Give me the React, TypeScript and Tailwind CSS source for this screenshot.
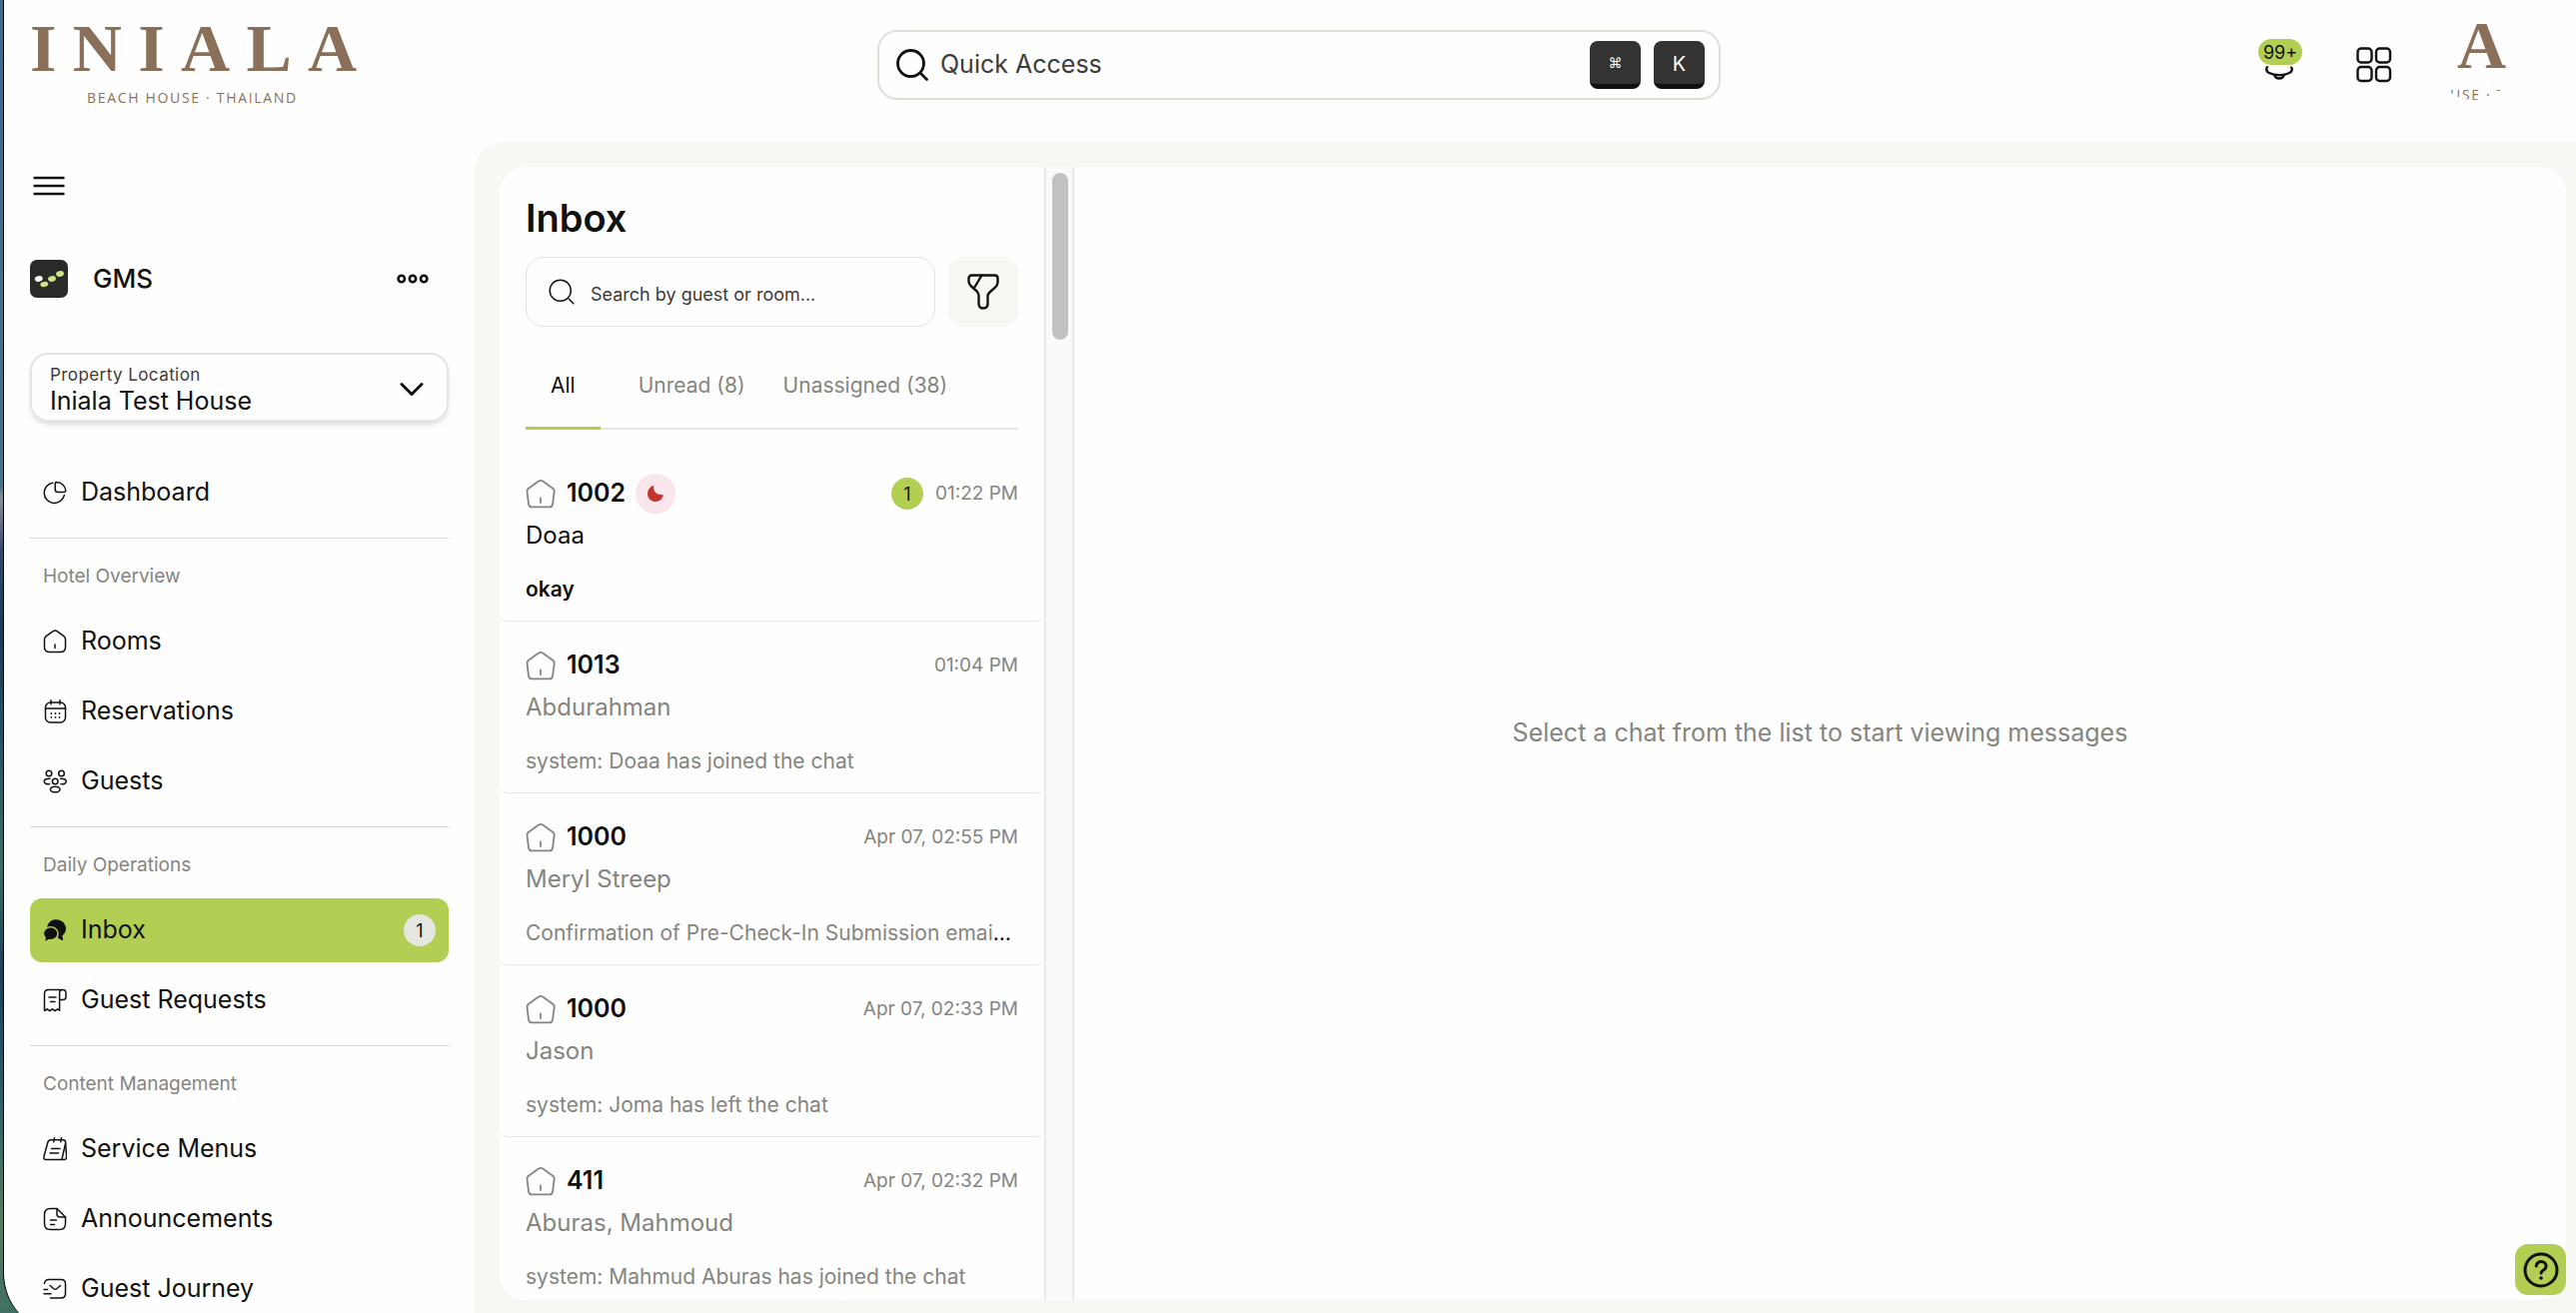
import React from "react";

type IconProps = { className?: string };

const stroke = {
  fill: "none",
  stroke: "currentColor",
  strokeLinecap: "round" as const,
  strokeLinejoin: "round" as const,
};

function Tagline() {
  return (
    <span className="block font-['Open_Sans',sans-serif] text-[14px] leading-[16px] tracking-[0.12em] whitespace-nowrap">
      BEACH HOUSE · THAILAND
    </span>
  );
}

function Wordmark() {
  return (
    <div className="w-[350px] text-[#8a7058]">
      <div className="font-['Liberation_Serif',serif] text-[68px] font-bold leading-[44px] tracking-[0.24em] whitespace-nowrap">
        INIALA
      </div>
      <div className="mt-[20px] pl-[57px]">
        <Tagline />
      </div>
    </div>
  );
}

function SearchIcon({ className, width = 2 }: IconProps & { width?: number }) {
  return (
    <svg viewBox="0 0 32 32" strokeWidth={width} {...stroke} className={className} aria-hidden="true">
      <circle cx="14.5" cy="14.5" r="13" />
      <path d="M25 25l5.5 5.5" />
    </svg>
  );
}

function PieIcon() {
  return (
    <svg viewBox="0 0 24 24" strokeWidth="1.5" {...stroke} className="size-6 shrink-0" aria-hidden="true">
      <path d="M9.8 2.2A10.2 10.2 0 1 0 21.4 14.4" />
      <path d="M13.5 1.6c5 .2 8.700 3.500 9.200 8 .1 1.300-.6 2-1.700 2h-6c-1.900 0-2.800-.9-2.800-2.800V3c0-.9.500-1.400 1.300-1.400z" />
    </svg>
  );
}

function RoomsIcon() {
  return (
    <svg viewBox="0 0 24 24" strokeWidth="1.5" {...stroke} className="size-6 shrink-0" aria-hidden="true">
      <path d="M10.200 1.700c1.200-.9 2.600-.9 3.800 0l6.800 4.900c1.100.8 1.700 1.900 1.700 3.200v7.700c0 3.200-1.800 5-5 5h-11c-3.200 0-5-1.800-5-5V9.800c0-1.300.6-2.400 1.700-3.200z" />
      <path d="M12 15v3.500" />
    </svg>
  );
}

function CalendarIcon() {
  return (
    <svg viewBox="0 0 24 24" strokeWidth="1.5" {...stroke} className="size-6 shrink-0" aria-hidden="true">
      <rect x="2.500" y="3" width="20" height="20" rx="5" />
      <path d="M2.500 9h20M8 .8v4M17 .8v4" />
      <g strokeWidth="1.800">
        <path d="M8.300 14h.01M12.500 14h.01M16.500 14h.01M8.300 17.800h.01M12.500 17.800h.01M16.500 17.800h.01" />
      </g>
    </svg>
  );
}

function GuestsIcon() {
  return (
    <svg viewBox="0 0 24 24" strokeWidth="1.500" {...stroke} className="size-6 shrink-0" aria-hidden="true">
      <circle cx="6" cy="4" r="2.800" />
      <circle cx="18.500" cy="4" r="2.800" />
      <circle cx="12.200" cy="12" r="2.800" />
      <ellipse cx="12.200" cy="20" rx="4.800" ry="2.800" />
      <path d="M7 9.200C3.800 9 1.200 10 1.200 12s2.300 3 5.300 2.600M17.500 9.200c3.200-.2 5.800.8 5.800 2.800s-2.300 3-5.300 2.600" />
    </svg>
  );
}

function ChatIcon() {
  return (
    <svg viewBox="0 0 24 24" fill="currentColor" className="size-6 shrink-0" aria-hidden="true">
      <path d="M13 1.200c5.600 0 10 3.900 10 9 0 3-1.500 5.500-3.700 7.200l.8 3.300c.2 1-.8 1.600-1.600 1.100l-3.700-2.300c.6-1.200.9-2.500.9-3.800 0-4.400-3.600-7.600-8.200-7.600-1.200 0-2.300.2-3.300.6C5.200 3.800 8.700 1.200 13 1.200z" />
      <path d="M7.700 9.600c3.700 0 6.500 2.500 6.500 5.700s-2.800 5.700-6.500 5.700c-.6 0-1.300-.1-1.900-.2l-2.300 1.400c-.6.400-1.300-.1-1.100-.8l.5-2.300c-1.100-1-1.700-2.300-1.700-3.800 0-3.200 2.800-5.700 6.500-5.700z" />
    </svg>
  );
}

function ReceiptIcon() {
  return (
    <svg viewBox="0 0 24 24" strokeWidth="1.500" {...stroke} className="size-6 shrink-0" aria-hidden="true">
      <path d="M20 1.500H5.500c-2.500 0-4 1.500-4 4v17l2.700-1.700 2.600 1.900 2.600-1.900 2.600 1.900 2.600-1.900 2 1.400V5c0-2.200 1.200-3.500 3.200-3.500 2.300 0 3.200 1.500 3.200 3.500v3.500c0 2-1 3-3 3h-3.400" />
      <path d="M6 9h7M7.500 13.500H12" />
    </svg>
  );
}

function MenusIcon() {
  return (
    <svg viewBox="0 0 24 24" strokeWidth="1.500" {...stroke} className="size-6 shrink-0" aria-hidden="true">
      <path d="M8 2.800h12c1.600 0 2.500.9 2.600 2.500l1 14.200c.1 1.900-.8 3-2.700 3H3c-1.700 0-2.600-1.100-2.100-2.800L4.800 5.200C5.300 3.600 6.400 2.800 8 2.800z" />
      <path d="M22.500 6.500L19 22M11.500.8l-.8 4M18.500.8l-.8 4M8.500 11.500h8.500M7 16h8.500" />
    </svg>
  );
}

function NoteIcon() {
  return (
    <svg viewBox="0 0 24 24" strokeWidth="1.500" {...stroke} className="size-6 shrink-0" aria-hidden="true">
      <path d="M14 1.500H7.500c-3.700 0-6 2.300-6 6v9c0 3.700 2.300 6 6 6h9c3.700 0 6-2.300 6-6V10z" />
      <path d="M14 1.500V7c0 2 1 3 3 3h5.500M7.500 13h6M7.500 17.500h4" />
    </svg>
  );
}

function JourneyIcon() {
  return (
    <svg viewBox="0 0 24 24" strokeWidth="1.500" {...stroke} className="size-6 shrink-0" aria-hidden="true">
      <path d="M1.500 6.500c.2-2.500 1.800-4 4.500-4h12c3 0 4.500 1.700 4.500 4.500v9.500c0 3-1.500 4.500-4.500 4.500H7.500" />
      <path d="M7 8.500l3.500 3c1.200 1 2.300 1 3.500 0l3.500-3M1 12.500h3.500M1 16.800h7" />
    </svg>
  );
}

function HouseIcon() {
  return (
    <svg viewBox="0 0 30 30" strokeWidth="1.800" {...stroke} className="size-[30px] shrink-0 text-[#85857f]" aria-hidden="true">
      <path d="M13 2.600c1.200-.9 3-.9 4.200 0l10 7.100c1.200.9 1.700 2 1.500 3.400l-1.600 12.200c-.3 2-1.500 3.100-3.500 3.100H6.500c-2 0-3.200-1.100-3.500-3.100L1.500 13.100c-.2-1.400.3-2.500 1.500-3.400z" />
      <path d="M15 19.500V24" />
    </svg>
  );
}

type NavItem = { label: string; icon: () => React.JSX.Element; badge?: string; active?: boolean };

const sections: { title: string; items: NavItem[] }[] = [
  {
    title: "Hotel Overview",
    items: [
      { label: "Rooms", icon: RoomsIcon },
      { label: "Reservations", icon: CalendarIcon },
      { label: "Guests", icon: GuestsIcon },
    ],
  },
  {
    title: "Daily Operations",
    items: [
      { label: "Inbox", icon: ChatIcon, badge: "1", active: true },
      { label: "Guest Requests", icon: ReceiptIcon },
    ],
  },
  {
    title: "Content Management",
    items: [
      { label: "Service Menus", icon: MenusIcon },
      { label: "Announcements", icon: NoteIcon },
      { label: "Guest Journey", icon: JourneyIcon },
    ],
  },
];

type Chat = {
  room: string;
  time: string;
  name: string;
  message: string;
  more?: boolean;
  unread?: number;
  away?: boolean;
};

const chats: Chat[] = [
  { room: "1002", time: "01:22 PM", name: "Doaa", message: "okay", unread: 1, away: true },
  { room: "1013", time: "01:04 PM", name: "Abdurahman", message: "system: Doaa has joined the chat" },
  { room: "1000", time: "Apr 07, 02:55 PM", name: "Meryl Streep", message: "Confirmation of Pre-Check-In Submission emai", more: true },
  { room: "1000", time: "Apr 07, 02:33 PM", name: "Jason", message: "system: Joma has left the chat" },
  { room: "411", time: "Apr 07, 02:32 PM", name: "Aburas, Mahmoud", message: "system: Mahmud Aburas has joined the chat" },
];

function NavLink({ item }: { item: NavItem }) {
  const Icon = item.icon;
  return (
    <li>
      <a
        href="#"
        aria-current={item.active ? "page" : undefined}
        className={
          item.active
            ? "flex h-16 items-center gap-[14px] rounded-xl bg-[#b2cf54] px-[13px] text-[25px]"
            : "flex h-16 items-center gap-[14px] rounded-xl px-[13px] text-[25px]"
        }
      >
        <Icon />
        <span className="flex-1">{item.label}</span>
        {item.badge && (
          <span className="flex size-8 items-center justify-center rounded-full bg-[#e5e6e0] text-[18px]">{item.badge}</span>
        )}
      </a>
    </li>
  );
}

function Header() {
  return (
    <header className="flex h-[142px] shrink-0 pb-3">
      <div className="w-[470px] shrink-0 pt-[26px] pl-[26px]">
        <Wordmark />
      </div>
      <div className="flex flex-1 items-center justify-center">
        <div className="flex h-[70px] w-full max-w-[844px] items-center rounded-[20px] border-2 border-[#dfe0d8] pr-[14px] pl-[17px]">
          <SearchIcon className="size-8 shrink-0" width={2.8} />
          <input
            type="text"
            aria-label="Quick Access"
            placeholder="Quick Access"
            className="ml-3 min-w-0 flex-1 bg-transparent text-[25px] outline-none placeholder:text-[#3c3c3a] placeholder:opacity-100"
          />
          <div className="flex gap-[13px] text-white">
            <kbd className="flex h-12 w-[51px] items-center justify-center rounded-lg border-b-[5px] border-[#111110] bg-[#333331] pt-0.5 font-['DejaVu_Sans',sans-serif] text-[14px]">
              ⌘
            </kbd>
            <kbd className="flex h-12 w-[51px] items-center justify-center rounded-lg border-b-[5px] border-[#111110] bg-[#333331] pt-0.5 font-['Inter',sans-serif] text-[20px]">
              K
            </kbd>
          </div>
        </div>
      </div>
      <div className="flex w-[452px] shrink-0 items-center justify-end pr-[61px]">
        <button type="button" aria-label="Notifications" className="relative mr-[54px] flex w-11 justify-center">
          <svg viewBox="0 0 32 32" strokeWidth="2.4" {...stroke} className="size-8" aria-hidden="true">
            <path d="M15 2C8.500 2 5.500 6 5.500 11c0 3.500-1 5-2.500 7-1.500 2-.8 4.800 2 6 5.500 2.800 14.500 2.800 20 0 2.800-1.200 3.500-4 2-6-1.500-2-2.500-3.500-2.500-7 0-5-3-9-9.500-9z" />
            <path d="M10.500 26.500c1 4 8 4 9 0" />
          </svg>
          <span className="absolute -top-[10px] left-0 flex h-[26px] w-11 items-center justify-center rounded-full bg-[#b2cf54] text-[18px] ring-2 ring-[#fefefe]">
            99+
          </span>
        </button>
        <button type="button" aria-label="Apps" className="mr-[41px]">
          <svg viewBox="0 0 36 36" strokeWidth="2.400" {...stroke} className="size-9" aria-hidden="true">
            <rect x="1.500" y="1.500" width="14" height="14" rx="3.500" />
            <rect x="20" y="1.500" width="14" height="14" rx="3.500" />
            <rect x="1.500" y="20" width="14" height="14" rx="3.500" />
            <rect x="20" y="20" width="14" height="14" rx="3.500" />
          </svg>
        </button>
        <button
          type="button"
          aria-label="Account"
          className="relative mb-3 size-[82px] overflow-hidden rounded-full pt-[5px] pl-[24px] text-left text-[#8a7058]"
        >
          <span className="block h-full font-['Liberation_Serif',serif] text-[68px] font-bold leading-[44px]">A</span>
          <span className="absolute top-[69px] -left-[66px]">
            <Tagline />
          </span>
        </button>
      </div>
    </header>
  );
}

function Sidebar() {
  return (
    <aside className="w-[470px] shrink-0 overflow-hidden pt-8 pr-[25px] pl-[26px]">
      <button type="button" aria-label="Toggle menu" className="ml-[3px] block">
        <svg viewBox="0 0 32 24" strokeWidth="2.400" {...stroke} className="h-6 w-8" aria-hidden="true">
          <path d="M1.500 4h29M1.500 12h29M1.500 20h29" />
        </svg>
      </button>
      <div className="mt-[62px] flex h-[38px] items-center">
        <svg viewBox="0 0 38 38" className="size-[38px]" aria-hidden="true">
          <rect width="38" height="38" rx="7" fill="#2a2a29" />
          <ellipse cx="8.800" cy="19" rx="4" ry="2.800" fill="#ffffff" transform="rotate(-12 8.800 19)" />
          <ellipse cx="14.300" cy="24.500" rx="4" ry="2.600" fill="#cfe585" transform="rotate(-12 14.300 24.500)" />
          <ellipse cx="22" cy="19" rx="4" ry="2.800" fill="#cfe585" transform="rotate(-12 22 19)" />
          <ellipse cx="30" cy="14" rx="4" ry="2.800" fill="#cfe585" transform="rotate(-12 30 14)" />
        </svg>
        <h2 className="ml-[25px] flex-1 pb-0.5 text-[26px] font-medium">GMS</h2>
        <button type="button" aria-label="More options" className="mr-5">
          <svg viewBox="0 0 32 12" strokeWidth="2.600" {...stroke} className="h-3 w-8" aria-hidden="true">
            <circle cx="4.800" cy="6" r="3.200" />
            <circle cx="16" cy="6" r="3.200" />
            <circle cx="27.200" cy="6" r="3.200" />
          </svg>
        </button>
      </div>
      <div className="relative mt-[55px] h-[69px] rounded-[18px] border-2 border-[#e4e5de] pt-[10px] pl-[18px] shadow-md">
        <label htmlFor="property" className="block text-[17px] leading-[20px] tracking-wide text-[#3c3c3a]">
          Property Location
        </label>
        <select id="property" className="block h-8 w-full appearance-none bg-transparent text-[25px] leading-8 outline-none">
          <option>Iniala Test House</option>
        </select>
        <svg viewBox="0 0 24 16" strokeWidth="3" {...stroke} className="pointer-events-none absolute top-[27px] right-[23px] h-4 w-6" aria-hidden="true">
          <path d="M2 2.500l10 10 10-10" />
        </svg>
      </div>
      <nav className="mt-[39px]">
        <ul>
          <NavLink item={{ label: "Dashboard", icon: PieIcon }} />
        </ul>
        {sections.map((section) => (
          <section key={section.title} className="mt-[13px] border-t border-[#d5d6cf]">
            <h3 className="flex h-[70px] items-center px-[13px] pt-[6px] text-[19px] text-[#85857f]">{section.title}</h3>
            <ul className="flex flex-col gap-[6px] pt-px">
              {section.items.map((item) => (
                <NavLink key={item.label} item={item} />
              ))}
            </ul>
          </section>
        ))}
      </nav>
    </aside>
  );
}

function ChatRow({ chat }: { chat: Chat }) {
  const unread = Boolean(chat.unread);
  return (
    <li className="h-[172px] shrink-0 rounded-b-lg border-b border-[#e3e3e1] px-[26px] pt-6">
      <a href="#" className="block">
        <div className="flex h-10 items-center">
          <HouseIcon />
          <span className="ml-[11px] text-[25px] font-semibold">{chat.room}</span>
          {chat.away && (
            <span className="ml-[10px] flex size-10 items-center justify-center rounded-full bg-[#f8e6ec]">
              <svg viewBox="0 0 20 20" className="size-5 text-[#c43530]" fill="currentColor" aria-hidden="true">
                <path d="M6.800 2.300c.8-.5 1.600.1 1.400 1-.5 4.500 3.300 8.200 8.300 7.700 1-.1 1.600.7 1.200 1.600-1.300 3.300-4 5.400-7.300 5.400C5.700 18 2 14.600 2 10.200c0-3.400 1.800-6.400 4.800-7.900z" />
              </svg>
            </span>
          )}
          <span className="ml-auto flex items-center gap-3">
            {unread && (
              <span className="flex size-8 items-center justify-center rounded-full bg-[#b2cf54] text-[18px]">{chat.unread}</span>
            )}
            <time className="text-[19px] text-[#85857f]">{chat.time}</time>
          </span>
        </div>
        <div className={unread ? "mt-[6px] text-[24px] leading-8" : "mt-[6px] text-[24px] leading-8 text-[#85857f]"}>{chat.name}</div>
        <p className="mt-[22px] truncate text-[21px] leading-8">
          <span className={unread ? "font-semibold" : "text-[#85857f]"}>{chat.message}</span>
          {chat.more && <span>…</span>}
        </p>
      </a>
    </li>
  );
}

function InboxPanel() {
  return (
    <section className="flex w-[545px] shrink-0 flex-col overflow-hidden">
      <h1 className="mt-[27px] px-[26px] text-[38px] leading-[48px] font-semibold">Inbox</h1>
      <div className="mt-[15px] flex gap-[13px] px-[26px]">
        <label className="flex h-[70px] min-w-0 flex-1 items-center rounded-[18px] border border-[#e3e3e1] pr-4 pl-[22px]">
          <SearchIcon className="size-[26px] shrink-0" width={1.8} />
          <input
            type="text"
            aria-label="Search by guest or room"
            placeholder="Search by guest or room..."
            className="ml-4 min-w-0 flex-1 bg-transparent pt-1 text-[18px] outline-none placeholder:text-[#3c3c3a] placeholder:opacity-100"
          />
        </label>
        <button type="button" aria-label="Filter" className="flex size-[70px] items-center justify-center rounded-[14px] bg-[#f7f8f3]">
          <svg viewBox="0 0 32 36" strokeWidth="2.400" {...stroke} className="h-9 w-8" aria-hidden="true">
            <path d="M4.500 1.500h23c1.800 0 3 1.200 3 3v4c0 2.200-1 3.800-2.600 5.200l-5.500 4.800c-1.300 1.100-1.900 2.400-1.900 4v7.500c0 2.800-1.800 4.500-4.500 4.500s-4.500-1.700-4.500-4.500V22c0-1.800-.5-3-1.700-4.300L3.500 12c-1.300-1.400-2-2.600-2-4.500v-3c0-1.800 1.200-3 3-3z" />
            <path d="M14.500 1.500L7 14" />
          </svg>
        </button>
      </div>
      <div role="tablist" className="mx-[26px] mt-[24px] flex h-[79px] items-stretch gap-[38px] border-b-2 border-[#e5e5e4] text-[21px]">
        <button type="button" role="tab" aria-selected="true" className="-mb-[2px] border-b-[3px] border-[#b2cf54] px-[25px] pb-[7px]">
          All
        </button>
        <button type="button" role="tab" aria-selected="false" className="pb-2 text-[#85857f]">
          Unread (8)
        </button>
        <button type="button" role="tab" aria-selected="false" className="pb-2 text-[#85857f]">
          Unassigned (38)
        </button>
      </div>
      <ul className="mt-[20px] flex min-h-0 flex-1 flex-col">
        {chats.map((chat, i) => (
          <ChatRow key={i} chat={chat} />
        ))}
      </ul>
    </section>
  );
}

export default function App() {
  return (
    <div className="h-screen overflow-hidden bg-[linear-gradient(to_bottom,#42668a_0%,#4c6f88_37%,#8a8f96_38%,#35486a_42%,#1d3a5a_48%,#2a5562_57%,#3f6b65_66%,#1e4058_74%,#2f5f66_84%,#5a7a60_93%,#3f6f65_100%)] pl-[3px] font-['Inter',sans-serif] text-[#111110]">
      <div className="flex h-[calc(100vh+20px)] flex-col overflow-hidden rounded-bl-[60px] border-l border-black bg-[#fefefe] pb-5">
        <Header />
        <div className="flex min-h-0 flex-1">
          <Sidebar />
          <main className="flex min-w-0 flex-1 rounded-tl-[30px] bg-[#f7f8f3] pt-[25px] pr-[10px] pb-[13px] pl-[26px]">
            <div className="relative flex min-w-0 flex-1">
              <div className="flex min-w-0 flex-1 overflow-hidden rounded-[26px] bg-[#fefefe]">
                <InboxPanel />
                <div className="w-[30px] shrink-0 border-x-2 border-[#e8e8e8] bg-[#fafafa] pt-[6px] pr-1 pl-[6px]">
                  <div className="h-[167px] rounded-full bg-[#c1c1c1]" />
                </div>
                <section className="flex min-w-0 flex-1 items-center justify-center text-[25px] text-[#85857f]">
                  <p>Select a chat from the list to start viewing messages</p>
                </section>
              </div>
              <button
                type="button"
                aria-label="Help"
                className="absolute right-0 bottom-[5px] flex size-[51px] items-center justify-center rounded-[13px] bg-[#b2cf54]"
              >
                <svg viewBox="0 0 36 36" strokeWidth="3" {...stroke} className="size-9" aria-hidden="true">
                  <circle cx="18" cy="18" r="16" />
                  <path d="M13.200 14c.3-2.800 2.200-4.400 4.900-4.400 2.800 0 5 1.800 5 4.500 0 2-1 3-2.800 4.100-1.300.8-2.200 1.300-2.200 2.800" />
                  <path d="M18 26h.01" strokeWidth="3.600" />
                </svg>
              </button>
            </div>
          </main>
        </div>
      </div>
    </div>
  );
}
